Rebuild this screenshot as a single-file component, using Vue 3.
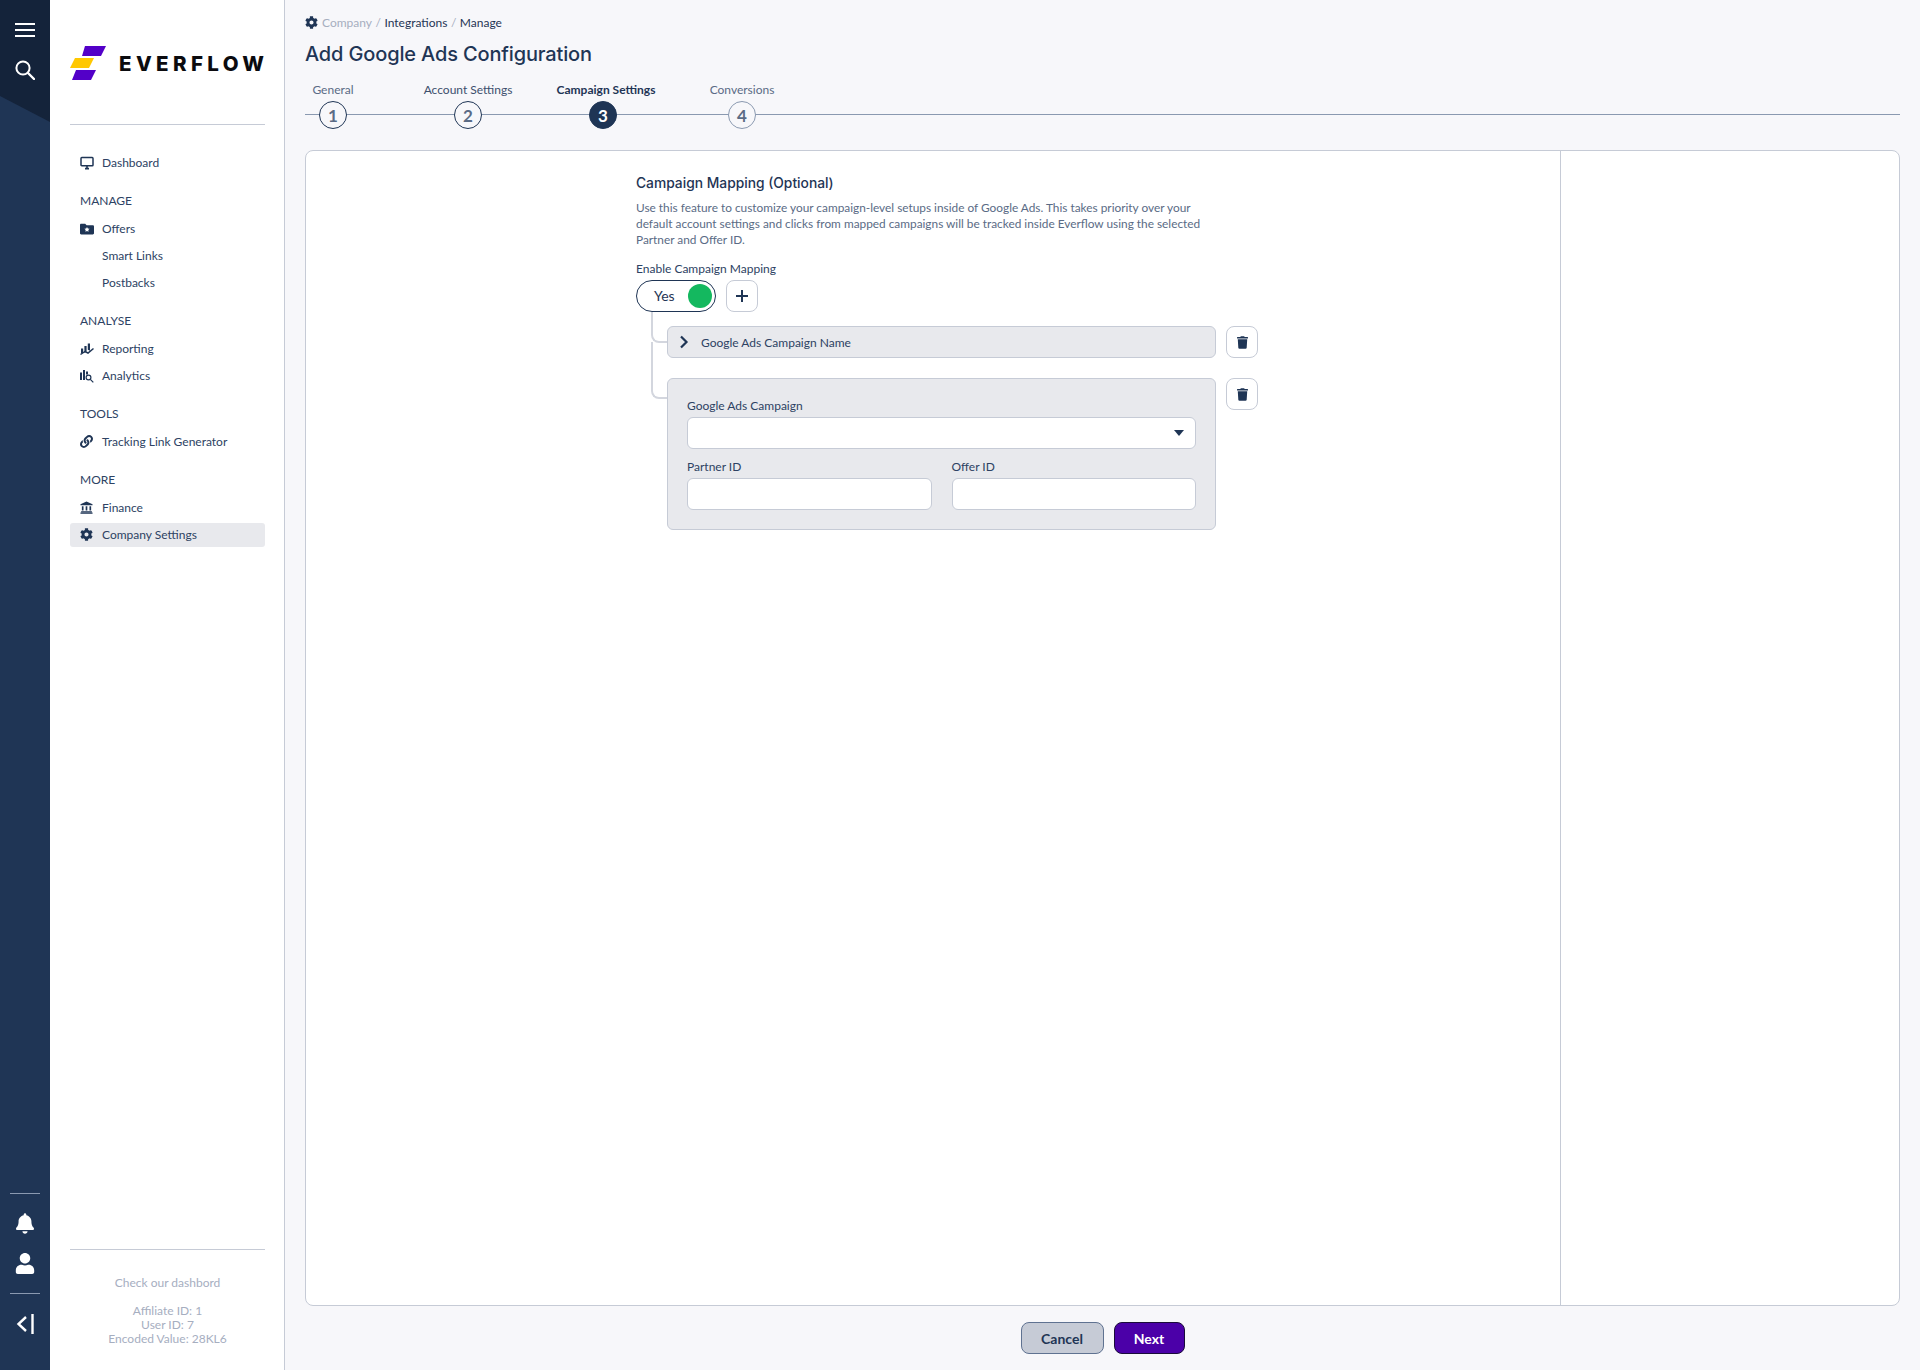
<template>
  <div class="layout">
    <aside class="rail">
      <div class="rail-top">
        <svg class="rail-menu" viewBox="0 0 20 14" width="20" height="14">
          <path d="M0 1h20M0 7h20M0 13h20" stroke="#fff" stroke-width="2" />
        </svg>
        <svg class="rail-search" viewBox="0 0 20 20" width="20" height="20">
          <circle cx="8" cy="8" r="6.6" fill="none" stroke="#fff" stroke-width="2" />
          <path d="M13 13l6 6" stroke="#fff" stroke-width="2.4" stroke-linecap="round" />
        </svg>
      </div>
      <div class="rail-bottom">
        <div class="rail-rule"></div>
        <svg class="rail-bell" viewBox="0 0 448 512" width="18" height="21">
          <path fill="#fff" :d="icons.bell" />
        </svg>
        <svg class="rail-user" viewBox="0 0 448 512" width="20" height="21">
          <path fill="#fff" :d="icons.user" />
        </svg>
        <div class="rail-rule"></div>
        <svg class="rail-collapse" viewBox="0 0 18 20" width="18" height="20">
          <path d="M10 3l-7.5 7 7.5 7" fill="none" stroke="#fff" stroke-width="2.4" />
          <path d="M16.5 0v20" stroke="#fff" stroke-width="2.4" />
        </svg>
      </div>
    </aside>

    <nav class="sidebar">
      <div class="logo">
        <svg viewBox="0 0 36 34" width="36" height="34">
          <polygon points="15,0 36,0 31,10 12,10" fill="#5300c8" />
          <polygon points="5,12 24,12 19,22 0,22" fill="#ffc800" />
          <polygon points="6,24 26,24 21,34 2,34" fill="#5300c8" />
        </svg>
        <span class="logo-text">EVERFLOW</span>
      </div>
      <div class="side-rule"></div>

      <div class="nav">
        <div v-for="group in nav" :key="group.title" class="nav-group">
          <div v-if="group.title !== 'top'" class="nav-title">{{ group.title }}</div>
          <a
            v-for="item in group.items"
            :key="item.label"
            class="nav-item"
            :class="{ active: item.active }"
          >
            <span class="nav-icon">
              <svg v-if="item.icon === 'monitor'" viewBox="0 0 14 14" width="14" height="14">
                <rect x="1" y="1.6" width="12" height="8.2" rx="0.8" fill="none" stroke="#1f3555" stroke-width="1.5" />
                <path d="M5 12.6h4M7 10v2.4" stroke="#1f3555" stroke-width="1.6" />
              </svg>
              <svg v-else-if="item.icon === 'folder'" viewBox="0 0 14 14" width="14" height="14">
                <path fill="#1f3555" d="M1.2 1.8h4l1.4 1.4h6.2c.6 0 1.2.5 1.2 1.2v6.8c0 .7-.6 1.2-1.2 1.2H1.2C.5 12.4 0 11.900 0 11.200V3c0-.7.5-1.200 1.200-1.200z" />
                <polygon fill="#fff" points="7,4.900 7.800,6.600 9.600,6.800 8.300,8 8.600,9.800 7,8.900 5.400,9.800 5.700,8 4.400,6.800 6.200,6.600" />
              </svg>
              <svg v-else-if="item.icon === 'report'" viewBox="0 0 14 14" width="14" height="14">
                <path fill="#1f3555" d="M1 6.500h2.200v4.500H1zM4.400 4h2.200v5.500l-2.200 1.500zM7.800 1.500H10v7.200l-2.200-1z" />
                <path d="M0.500 12.500l4.500-3 3 1.500 5.500-4.500" fill="none" stroke="#1f3555" stroke-width="1.500" />
              </svg>
              <svg v-else-if="item.icon === 'analytics'" viewBox="0 0 14 14" width="14" height="14">
                <path fill="#1f3555" d="M0 3.500h2v7.500H0zM3 1h2v10H3zM6 2.500h2v3H6z" />
                <circle cx="8.500" cy="8.500" r="2.400" fill="none" stroke="#1f3555" stroke-width="1.200" />
                <path d="M10.300 10.300l3 3" stroke="#1f3555" stroke-width="1.200" />
              </svg>
              <svg v-else-if="item.icon === 'link'" viewBox="0 0 512 512" width="13" height="13">
                <path fill="#1f3555" :d="icons.link" />
              </svg>
              <svg v-else-if="item.icon === 'bank'" viewBox="0 0 14 14" width="13" height="13">
                <path fill="#1f3555" d="M7 .5l6.500 3v1.200H.500V3.500zM2 5.600h1.800v4.600H2zM6.100 5.600h1.800v4.600H6.100zM10.200 5.600H12v4.600h-1.800zM1.200 11h11.600v1.100H1.200zM.500 12.500h13v1.100H.500z" />
              </svg>
              <svg v-else-if="item.icon === 'cog'" viewBox="0 0 512 512" width="13" height="13">
                <path fill="#1f3555" :d="icons.cog" />
              </svg>
            </span>
            {{ item.label }}
          </a>
        </div>
      </div>

      <div class="side-foot">
        <div class="side-rule"></div>
        <div class="foot-text">
          <p class="foot-link">Check our dashbord</p>
          <p>Affiliate ID: 1</p>
          <p>User ID: 7</p>
          <p>Encoded Value: 28KL6</p>
        </div>
      </div>
    </nav>

    <main class="main">
      <div class="crumbs">
        <svg viewBox="0 0 512 512" width="13" height="13"><path fill="#1f3555" :d="icons.cog" /></svg>
        <span class="crumb-muted">Company</span>
        <span class="crumb-sep">/</span>
        <span>Integrations</span>
        <span class="crumb-sep">/</span>
        <span>Manage</span>
      </div>
      <h1>Add Google Ads Configuration</h1>

      <div class="steps">
        <div v-for="step in steps" :key="step.num" class="step" :class="step.cls">
          <span class="step-label">{{ step.label }}</span>
          <span class="step-num">{{ step.num }}</span>
        </div>
      </div>

      <section class="card">
        <div class="card-left">
          <h2>Campaign Mapping (Optional)</h2>
          <p class="desc">
            Use this feature to customize your campaign-level setups inside of Google Ads. This takes priority over your<br />
            default account settings and clicks from mapped campaigns will be tracked inside Everflow using the selected<br />
            Partner and Offer ID.
          </p>
          <label class="field-label enable-label">Enable Campaign Mapping</label>
          <div class="toggle-row">
            <div class="toggle">
              <span class="toggle-text">Yes</span>
              <span class="knob"></span>
            </div>
            <button class="icon-btn">
              <svg viewBox="0 0 14 14" width="14" height="14">
                <path d="M7 1v12M1 7h12" stroke="#1f3555" stroke-width="2" />
              </svg>
            </button>
          </div>

          <div class="tree">
            <div class="tree-row first">
              <div class="collapsed">
                <svg viewBox="0 0 10 14" width="10" height="14">
                  <path d="M2 1.500L7.500 7 2 12.500" fill="none" stroke="#1f3555" stroke-width="2.200" />
                </svg>
                <span>Google Ads Campaign Name</span>
              </div>
              <button class="icon-btn">
                <svg viewBox="0 0 448 512" width="11" height="13"><path fill="#1f3555" :d="icons.trash" /></svg>
              </button>
            </div>
            <div class="tree-row second">
              <div class="panel">
                <label class="field-label">Google Ads Campaign</label>
                <div class="input select">
                  <svg viewBox="0 0 10 6" width="10" height="6"><polygon points="0,0 10,0 5,6" fill="#1f3555" /></svg>
                </div>
                <div class="two-col">
                  <div>
                    <label class="field-label">Partner ID</label>
                    <div class="input"></div>
                  </div>
                  <div>
                    <label class="field-label">Offer ID</label>
                    <div class="input"></div>
                  </div>
                </div>
              </div>
              <button class="icon-btn">
                <svg viewBox="0 0 448 512" width="11" height="13"><path fill="#1f3555" :d="icons.trash" /></svg>
              </button>
            </div>
          </div>
        </div>
        <div class="card-right"></div>
      </section>

      <div class="actions">
        <button class="btn cancel">Cancel</button>
        <button class="btn next">Next</button>
      </div>
    </main>
  </div>
</template>

<script setup>
const icons = {
  cog: 'M487.4 315.7l-42.6-24.6c4.3-23.2 4.3-47 0-70.2l42.6-24.6c4.9-2.8 7.1-8.6 5.5-14-11.1-35.6-30-67.8-54.7-94.6-3.8-4.1-10-5.1-14.8-2.3L380.8 110c-17.9-15.4-38.5-27.3-60.8-35.1V25.8c0-5.6-3.9-10.5-9.4-11.7-36.7-8.2-74.3-7.8-109.2 0-5.5 1.2-9.4 6.1-9.4 11.7V75c-22.2 7.9-42.8 19.8-60.8 35.1L88.7 85.5c-4.9-2.8-11-1.9-14.8 2.3-24.7 26.7-43.6 58.9-54.7 94.6-1.7 5.4.6 11.2 5.5 14L67.3 221c-4.3 23.2-4.3 47 0 70.2l-42.6 24.6c-4.9 2.8-7.1 8.6-5.5 14 11.1 35.6 30 67.8 54.7 94.6 3.8 4.1 10 5.1 14.8 2.3l42.6-24.6c17.9 15.4 38.5 27.3 60.8 35.1v49.2c0 5.6 3.9 10.5 9.4 11.7 36.7 8.2 74.3 7.8 109.2 0 5.5-1.2 9.4-6.1 9.4-11.7v-49.2c22.2-7.9 42.8-19.8 60.8-35.1l42.6 24.6c4.9 2.8 11 1.9 14.8-2.3 24.7-26.7 43.6-58.9 54.7-94.6 1.5-5.5-.7-11.3-5.6-14.1zM256 336c-44.1 0-80-35.9-80-80s35.9-80 80-80 80 35.9 80 80-35.9 80-80 80z',
  trash: 'M432 32H312l-9.4-18.7A24 24 0 0 0 281.1 0H166.8a23.72 23.72 0 0 0-21.4 13.3L136 32H16A16 16 0 0 0 0 48v32a16 16 0 0 0 16 16h416a16 16 0 0 0 16-16V48a16 16 0 0 0-16-16zM53.2 467a48 48 0 0 0 47.9 45h245.8a48 48 0 0 0 47.9-45L416 128H32z',
  bell: 'M224 512c35.32 0 63.97-28.65 63.97-64H160.03c0 35.35 28.65 64 63.97 64zm215.39-149.71c-19.32-20.76-55.47-51.99-55.47-154.29 0-77.7-54.48-139.9-127.94-155.16V32c0-17.67-14.32-32-31.98-32s-31.98 14.33-31.98 32v20.84C118.56 68.1 64.08 130.3 64.08 208c0 102.3-36.15 133.53-55.47 154.29-6 6.45-8.66 14.16-8.61 21.71.11 16.4 12.98 32 32.1 32h383.8c19.12 0 32-15.6 32.1-32 .05-7.55-2.61-15.27-8.61-21.71z',
  user: 'M224 256c70.7 0 128-57.3 128-128S294.7 0 224 0 96 57.3 96 128s57.3 128 128 128zm89.6 32h-16.7c-22.2 10.2-46.9 16-72.9 16s-50.6-5.8-72.9-16h-16.7C60.2 288 0 348.2 0 422.4V464c0 26.5 21.5 48 48 48h352c26.5 0 48-21.5 48-48v-41.6c0-74.2-60.2-134.4-134.4-134.4z',
  link: 'M326.612 185.391c59.747 59.809 58.927 155.698.36 214.59-.11.12-.24.25-.36.37l-67.2 67.2c-59.27 59.27-155.699 59.262-214.96 0-59.27-59.26-59.27-155.7 0-214.96l37.106-37.106c9.84-9.84 26.786-3.3 27.294 10.606.648 17.722 3.826 35.527 9.69 52.721 1.986 5.822.567 12.262-3.783 16.612l-13.087 13.087c-28.026 28.026-28.905 73.66-1.155 101.96 28.024 28.579 74.086 28.749 102.325.51l67.2-67.19c28.191-28.191 28.073-73.757 0-101.83-3.701-3.694-7.429-6.564-10.341-8.569a16.037 16.037 0 0 1-6.947-12.606c-.396-10.567 3.348-21.456 11.698-29.806l21.054-21.055c5.521-5.521 14.182-6.199 20.584-1.731a152.482 152.482 0 0 1 20.522 17.197zM467.547 44.449c-59.261-59.262-155.69-59.27-214.96 0l-67.2 67.2c-.12.12-.25.25-.36.37-58.566 58.892-59.387 154.781.36 214.59a152.454 152.454 0 0 0 20.521 17.196c6.402 4.468 15.064 3.789 20.584-1.731l21.054-21.055c8.35-8.35 12.094-19.239 11.698-29.806a16.037 16.037 0 0 0-6.947-12.606c-2.912-2.005-6.64-4.875-10.341-8.569-28.073-28.073-28.191-73.639 0-101.83l67.2-67.19c28.239-28.239 74.3-28.069 102.325.51 27.75 28.3 26.872 73.934-1.155 101.96l-13.087 13.087c-4.35 4.35-5.769 10.79-3.783 16.612 5.864 17.194 9.042 34.999 9.69 52.721.509 13.906 17.454 20.446 27.294 10.606l37.106-37.106c59.271-59.259 59.271-155.699.001-214.959z'
}

const nav = [
  { title: 'top', items: [{ label: 'Dashboard', icon: 'monitor' }] },
  {
    title: 'MANAGE',
    items: [
      { label: 'Offers', icon: 'folder' },
      { label: 'Smart Links' },
      { label: 'Postbacks' }
    ]
  },
  {
    title: 'ANALYSE',
    items: [
      { label: 'Reporting', icon: 'report' },
      { label: 'Analytics', icon: 'analytics' }
    ]
  },
  { title: 'TOOLS', items: [{ label: 'Tracking Link Generator', icon: 'link' }] },
  {
    title: 'MORE',
    items: [
      { label: 'Finance', icon: 'bank' },
      { label: 'Company Settings', icon: 'cog', active: true }
    ]
  }
]

const steps = [
  { num: 1, label: 'General', cls: 'done' },
  { num: 2, label: 'Account Settings', cls: 'done' },
  { num: 3, label: 'Campaign Settings', cls: 'current' },
  { num: 4, label: 'Conversions', cls: 'todo' }
]
</script>

<style>
body {
  background: #f7f7fa;
}
</style>

<style scoped>
.layout {
  display: flex;
  height: 1370px;
  font-family: Lato, "Liberation Sans", sans-serif;
  font-size: 12px;
  color: #1f3555;
}

/* left rail */
.rail {
  width: 50px;
  flex: none;
  background: #1f3555;
  display: flex;
  flex-direction: column;
  justify-content: space-between;
}
.rail-top {
  height: 122px;
  background: #14233a;
  clip-path: polygon(0 0, 100% 0, 100% 100%, 0 96px);
  display: flex;
  flex-direction: column;
  align-items: center;
}
.rail-menu {
  margin-top: 23px;
}
.rail-search {
  margin-top: 23px;
}
.rail-bottom {
  display: flex;
  flex-direction: column;
  align-items: center;
  padding-bottom: 36px;
}
.rail-rule {
  width: 30px;
  height: 1px;
  background: #8a99b0;
}
.rail-bell {
  margin-top: 19px;
}
.rail-user {
  margin-top: 19px;
  margin-bottom: 19px;
}
.rail-collapse {
  margin-top: 20px;
}

/* sidebar */
.sidebar {
  width: 235px;
  flex: none;
  box-sizing: border-box;
  background: #fff;
  border-right: 1px solid #c6cbd6;
  padding: 0 19px 0 20px;
  display: flex;
  flex-direction: column;
}
.logo {
  display: flex;
  align-items: center;
  gap: 13px;
  margin-top: 46px;
  height: 34px;
}
.logo svg {
  flex: none;
}
.logo-text {
  font-family: Inter, sans-serif;
  font-weight: 800;
  font-size: 20.5px;
  letter-spacing: 4.4px;
  white-space: nowrap;
  color: #0b0b0f;
}
.side-rule {
  height: 1px;
  background: #c6cbd6;
}
.logo + .side-rule {
  margin-top: 44px;
}
.nav {
  margin-top: 25.5px;
}
.nav-group {
  margin-bottom: 12.5px;
}
.nav-title {
  height: 28px;
  line-height: 28px;
  margin-bottom: 1.5px;
  padding-left: 10px;
  color: #2d4263;
}
.nav-item {
  display: flex;
  align-items: center;
  height: 24px;
  margin-bottom: 3px;
  padding-left: 10px;
  border-radius: 3px;
  color: #2d4263;
}
.nav-item.active {
  background: #e8e9ed;
}
.nav-icon {
  width: 22px;
  flex: none;
  display: flex;
  align-items: center;
}
.side-foot {
  margin-top: auto;
}
.foot-text {
  padding: 26px 0 24px;
  text-align: center;
  line-height: 14px;
  color: #a6aebf;
}
.foot-text p {
  margin: 0;
}
.foot-text .foot-link {
  margin-bottom: 14px;
}

/* main */
.main {
  flex: 1;
  min-width: 0;
  background: #f7f7fa;
  padding: 14px 20px 16px 20px;
  display: flex;
  flex-direction: column;
}
.crumbs {
  display: flex;
  align-items: center;
  gap: 3.5px;
  height: 16px;
  color: #1f3555;
}
.crumbs svg {
  margin-right: 0.5px;
}
.crumb-muted,
.crumb-sep {
  color: #a6aebf;
}
h1 {
  margin: 10px 0 0;
  font-family: Inter, sans-serif;
  font-weight: 500;
  font-size: 20px;
  letter-spacing: -0.15px;
  line-height: 28px;
  color: #1f3555;
}
.steps {
  margin-top: 14px;
  display: flex;
  background: linear-gradient(#8a99b0, #8a99b0) no-repeat 0 32px / 100% 1px;
}
.step {
  width: 56px;
  display: flex;
  flex-direction: column;
  align-items: center;
}
.step + .step {
  margin-left: 79px;
}
.step:nth-child(4) {
  margin-left: 83px;
}
.step-label {
  line-height: 16px;
  white-space: nowrap;
  color: #5a6b85;
}
.step:nth-child(2) .step-label {
  color: #3d4f6d;
}
.step:nth-child(3) .step-label {
  padding-left: 6px;
}
.step-num {
  margin-top: 3px;
  width: 28px;
  height: 28px;
  box-sizing: border-box;
  border-radius: 50%;
  display: flex;
  align-items: center;
  justify-content: center;
  font-size: 17px;
  font-weight: 700;
  background: #f7f7fa;
  border: 1px solid #1f3555;
  color: #5a6b85;
}
.current .step-label {
  font-weight: 700;
  color: #1f3555;
}
.current .step-num {
  background: #1f3555;
  color: #fff;
}
.todo .step-num {
  border-color: #8a99b0;
}

/* card */
.card {
  flex: 1;
  margin-top: 21px;
  display: flex;
  background: #fff;
  border: 1px solid #c6cbd6;
  border-radius: 8px;
}
.card-left {
  flex: 1;
  padding: 22px 0 0 330px;
  border-right: 1px solid #c6cbd6;
}
.card-right {
  width: 338px;
  flex: none;
}
h2 {
  margin: 0;
  font-family: Inter, sans-serif;
  font-weight: 500;
  font-size: 13.8px;
  line-height: 20px;
  color: #1f3555;
}
.desc {
  margin: 7px 0 0;
  font-size: 11.85px;
  line-height: 16px;
  color: #5a6b85;
}
.field-label {
  display: block;
  line-height: 16px;
  color: #2d4263;
}
.enable-label {
  margin-top: 13px;
}
.toggle-row {
  margin-top: 3px;
  display: flex;
  gap: 10px;
}
.toggle {
  width: 80px;
  height: 32px;
  box-sizing: border-box;
  border: 1px solid #1f3555;
  border-radius: 16px;
  display: flex;
  align-items: center;
  justify-content: space-between;
  padding: 0 3px 0 17px;
  font-size: 14px;
}
.toggle-text {
  margin-top: -2px;
}
.knob {
  width: 24px;
  height: 24px;
  border-radius: 50%;
  background: #14b85f;
}
.icon-btn {
  width: 32px;
  height: 32px;
  flex: none;
  padding: 0;
  background: #fff;
  border: 1px solid #c6cbd6;
  border-radius: 8px;
  display: flex;
  align-items: center;
  justify-content: center;
}
.tree {
  margin-left: 15px;
  padding-left: 16px;
  width: 591px;
}
.tree-row {
  position: relative;
  display: flex;
  align-items: flex-start;
  gap: 10px;
}
.tree-row::before {
  content: "";
  position: absolute;
  left: -16px;
  width: 16px;
  box-sizing: border-box;
  border-left: 2px solid #d3d6de;
  border-bottom: 2px solid #d3d6de;
  border-bottom-left-radius: 8px;
}
.first {
  margin-top: 14px;
}
.first::before {
  top: -14px;
  height: 31px;
}
.second {
  margin-top: 20px;
}
.second::before {
  top: -36px;
  height: 57px;
}
.collapsed {
  flex: 1;
  height: 32px;
  box-sizing: border-box;
  background: #e8e9ed;
  border: 1px solid #c6cbd6;
  border-radius: 6px;
  display: flex;
  align-items: center;
  gap: 12px;
  padding-left: 11px;
  color: #2d4263;
}
.panel {
  flex: 1;
  box-sizing: border-box;
  background: #e8e9ed;
  border: 1px solid #c6cbd6;
  border-radius: 6px;
  padding: 19px;
}
.input {
  height: 32px;
  margin-top: 3px;
  box-sizing: border-box;
  background: #fff;
  border: 1px solid #c6cbd6;
  border-radius: 6px;
}
.select {
  display: flex;
  align-items: center;
  justify-content: flex-end;
  padding-right: 11px;
}
.two-col {
  margin-top: 10px;
  display: grid;
  grid-template-columns: 1fr 1fr;
  gap: 20px;
}

/* actions */
.actions {
  margin-top: 16px;
  display: flex;
  justify-content: center;
  gap: 10px;
}
.btn {
  height: 32px;
  box-sizing: border-box;
  border-radius: 8px;
  font-family: Lato, sans-serif;
  font-size: 14px;
  font-weight: 700;
}
.cancel {
  width: 83px;
  background: #c6cbd6;
  border: 1px solid #5f7291;
  color: #1f3555;
}
.next {
  width: 71px;
  background: #4b00a8;
  border: 1px solid #1a0b3a;
  color: #fff;
}
</style>
